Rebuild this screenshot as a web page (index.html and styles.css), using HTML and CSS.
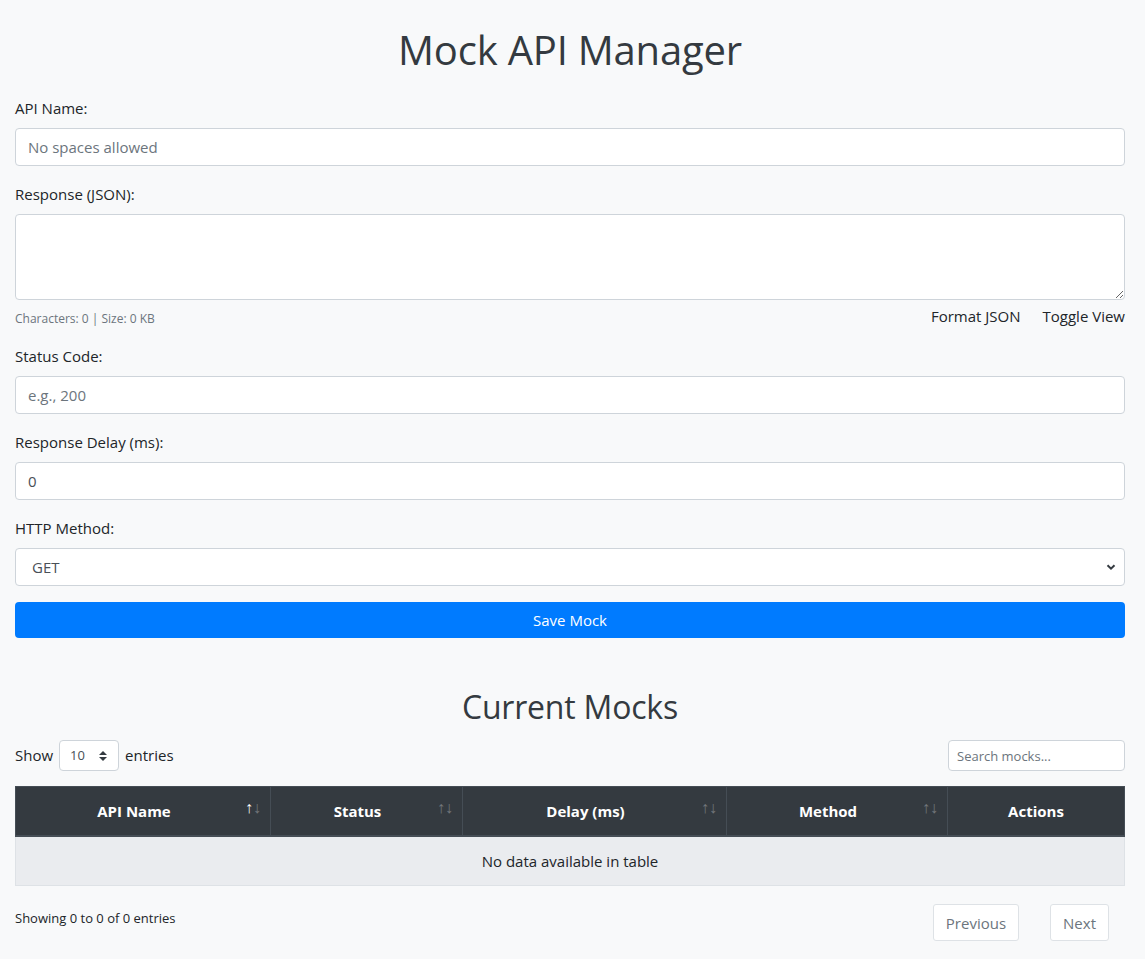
FILE: index.html
```html
<!DOCTYPE html>
<html lang="en">
<head>
<meta charset="utf-8">
<title>Mock API Manager</title>
<link rel="stylesheet" href="styles.css">
</head>
<body>
<div class="container">
  <h1 class="title">Mock API Manager</h1>
  <form class="mock-form">
    <div class="form-group">
      <label class="label" for="apiName">API Name:</label>
      <input class="form-control" id="apiName" type="text" placeholder="No spaces allowed">
    </div>
    <div class="form-group">
      <label class="label" for="resp">Response (JSON):</label>
      <textarea class="form-control textarea" id="resp" rows="3"></textarea>
      <div class="json-tools">
        <small class="char-info">Characters: 0 | Size: 0 KB</small>
        <div class="json-buttons">
          <button type="button" class="link-btn">Format JSON</button>
          <button type="button" class="link-btn">Toggle View</button>
        </div>
      </div>
    </div>
    <div class="form-group">
      <label class="label" for="status">Status Code:</label>
      <input class="form-control" id="status" type="text" placeholder="e.g., 200">
    </div>
    <div class="form-group">
      <label class="label" for="delay">Response Delay (ms):</label>
      <input class="form-control" id="delay" type="text" value="0">
    </div>
    <div class="form-group">
      <label class="label" for="method">HTTP Method:</label>
      <div class="select-wrap">
        <select class="form-control custom-select" id="method">
          <option>GET</option>
          <option>POST</option>
          <option>PUT</option>
          <option>DELETE</option>
        </select>
        <svg class="select-chevron" width="10" height="8" viewBox="0 0 10 8"><path d="M1.5 2.2 L5 5.6 L8.5 2.2" fill="none" stroke="#343a40" stroke-width="2"/></svg>
      </div>
    </div>
    <button type="button" class="btn-primary">Save Mock</button>
  </form>

  <h2 class="subtitle">Current Mocks</h2>
  <div class="dt-wrapper">
    <div class="dt-top">
      <div class="dt-length">
        <span>Show</span>
        <div class="len-select">
          <span class="len-value">10</span>
          <svg class="len-arrows" width="10" height="14" viewBox="0 0 10 14"><path d="M5 2 L9 6 L1 6 Z M5 12 L9 8 L1 8 Z" fill="#343a40"/></svg>
        </div>
        <span>entries</span>
      </div>
      <input class="dt-search" type="search" placeholder="Search mocks...">
    </div>
    <table class="dt-table">
      <thead>
        <tr>
          <th class="sortable asc col-name">API Name<span class="sort"><span class="sort-up">↑</span><span class="sort-down">↓</span></span></th>
          <th class="sortable col-status">Status<span class="sort"><span class="sort-up">↑</span><span class="sort-down">↓</span></span></th>
          <th class="sortable col-delay">Delay (ms)<span class="sort"><span class="sort-up">↑</span><span class="sort-down">↓</span></span></th>
          <th class="sortable col-method">Method<span class="sort"><span class="sort-up">↑</span><span class="sort-down">↓</span></span></th>
          <th class="col-actions">Actions</th>
        </tr>
      </thead>
      <tbody>
        <tr><td class="empty" colspan="5">No data available in table</td></tr>
      </tbody>
    </table>
    <div class="dt-bottom">
      <div class="dt-info">Showing 0 to 0 of 0 entries</div>
      <div class="dt-paginate">
        <span class="page-btn">Previous</span>
        <span class="page-btn next">Next</span>
      </div>
    </div>
  </div>
</div>
</body>
</html>
```
FILE: styles.css
```css
* { box-sizing: border-box; }
html, body {
  margin: 0;
  background: #f8f9fa;
}
body {
  font-family: "Open Sans", "Noto Sans", "Liberation Sans", sans-serif;
  font-size: 16px;
  line-height: 1.5;
  color: #212529;
}
.container {
  padding: 0 20px 20px 15px;
}
.title {
  margin: 26px 0 0;
  font-size: 40px;
  font-weight: 500;
  line-height: 48px;
  text-align: center;
  color: #343a40;
  letter-spacing: -0.2px;
}
.mock-form {
  margin-top: 22px;
}
.form-group {
  margin-bottom: 16px;
}
.label {
  display: block;
  margin-bottom: 8px;
  font-size: 15px;
  line-height: 24px;
}
.form-control {
  display: block;
  width: 100%;
  height: 38px;
  padding: 6px 12px;
  font-family: inherit;
  font-size: 15px;
  line-height: 24px;
  color: #495057;
  background: #fff;
  border: 1px solid #ced4da;
  border-radius: 4px;
}
.form-control::placeholder { color: #6c757d; }
.textarea {
  height: 86px;
  resize: vertical;
}
.json-tools {
  display: flex;
  justify-content: space-between;
  align-items: flex-start;
  margin-top: 4px;
  height: 24px;
}
.char-info {
  font-size: 12px;
  color: #6c757d;
  padding-top: 7px;
  line-height: 16px;
}
.json-buttons {
  display: flex;
  gap: 22px;
}
.link-btn {
  padding: 0;
  border: 0;
  background: none;
  font-family: inherit;
  font-size: 15px;
  line-height: 24px;
  color: #212529;
}
.select-wrap {
  position: relative;
}
.custom-select {
  appearance: none;
  -webkit-appearance: none;
  padding-left: 16px;
}
.select-chevron {
  position: absolute;
  right: 9px;
  top: 15px;
}
.btn-primary {
  display: block;
  width: 100%;
  height: 36px;
  border: 0;
  border-radius: 4px;
  background: #007bff;
  color: #fff;
  font-family: inherit;
  font-size: 15px;
}
.subtitle {
  margin: 50px 0 0;
  font-size: 32px;
  font-weight: 500;
  line-height: 38px;
  text-align: center;
  color: #343a40;
  letter-spacing: -0.2px;
}
.dt-wrapper {
  margin-top: 14px;
}
.dt-top {
  display: flex;
  justify-content: space-between;
  align-items: center;
  height: 31px;
}
.dt-length {
  display: flex;
  align-items: center;
  gap: 6px;
  font-size: 15px;
}
.len-select {
  display: flex;
  align-items: center;
  justify-content: space-between;
  width: 60px;
  height: 31px;
  padding: 0 10px;
  background: #fff;
  border: 1px solid #ced4da;
  border-radius: 4px;
  font-size: 13px;
  color: #495057;
}
.len-arrows { margin-top: 1px; }
.dt-search {
  width: 177px;
  height: 31px;
  padding: 4px 8px;
  font-family: inherit;
  font-size: 13px;
  color: #495057;
  background: #fff;
  border: 1px solid #ced4da;
  border-radius: 4px;
}
.dt-search::placeholder { color: #6c757d; }
.dt-table {
  width: 100%;
  margin-top: 15px;
  border-collapse: collapse;
  table-layout: fixed;
}
.dt-table th {
  position: relative;
  padding: 12px 30px 12px 12px;
  background: #343a40;
  color: #fff;
  font-size: 15px;
  font-weight: 700;
  line-height: 24px;
  text-align: center;
  border: 1px solid #454d55;
  border-bottom-width: 2px;
}
.dt-table th.col-actions { padding-right: 12px; }
.col-name { width: 255px; }
.col-status { width: 192px; }
.col-delay { width: 264px; }
.col-method { width: 221px; }
.sort {
  position: absolute;
  top: 9px;
  right: 9px;
  display: flex;
  font-family: "Liberation Sans", sans-serif;
  font-weight: 400;
  font-size: 16px;
  line-height: 24px;
}
.sort-up, .sort-down {
  display: block;
  width: 8px;
  text-align: center;
  color: #fff;
  opacity: 0.3;
}
.asc .sort-up { opacity: 1; }
.dt-table td.empty {
  padding: 12px;
  text-align: center;
  background: #eaecef;
  font-size: 15px;
  line-height: 24px;
  border: 1px solid #dee2e6;
}
.dt-bottom {
  display: flex;
  justify-content: space-between;
  align-items: flex-start;
  margin-top: 18px;
}
.dt-info {
  font-size: 13px;
  line-height: 24px;
  padding-top: 2px;
}
.dt-paginate {
  display: flex;
  gap: 31px;
  padding-right: 16px;
}
.page-btn {
  display: block;
  height: 37px;
  padding: 6px 12px;
  background: #fff;
  border: 1px solid #dee2e6;
  border-radius: 3px;
  color: #6c757d;
  font-size: 15px;
  line-height: 24px;
}
```
